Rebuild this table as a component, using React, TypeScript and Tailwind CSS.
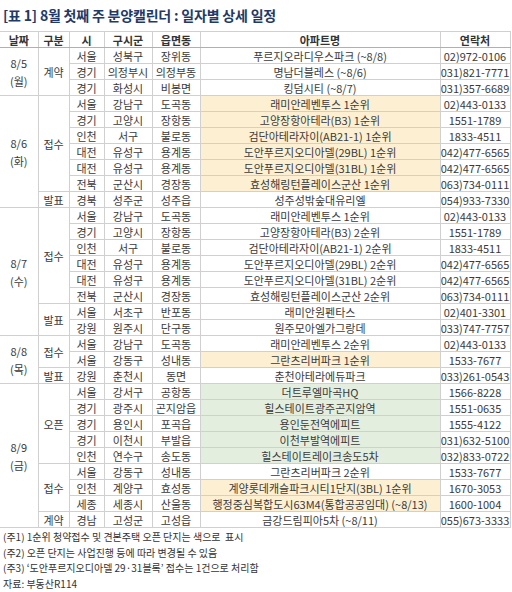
import React from 'react';

type Row = { si: string; gu: string; dong: string; apt: string; tel: string; hl?: 'y' | 'g' };
type Sub = { kind: string; rows: Row[] };
type Day = { date: string; dow: string; subs: Sub[] };

const DAYS: Day[] = [
  {
    date: '8/5',
    dow: '(월)',
    subs: [
      {
        kind: '계약',
        rows: [
          { si: '서울', gu: '성북구', dong: '장위동', apt: '푸르지오라디우스파크 (~8/8)', tel: '02)972-0106' },
          { si: '경기', gu: '의정부시', dong: '의정부동', apt: '명남더블레스 (~8/6)', tel: '031)821-7771' },
          { si: '경기', gu: '화성시', dong: '비봉면', apt: '킹덤시티 (~8/7)', tel: '031)357-6689' },
        ],
      },
    ],
  },
  {
    date: '8/6',
    dow: '(화)',
    subs: [
      {
        kind: '접수',
        rows: [
          { si: '서울', gu: '강남구', dong: '도곡동', apt: '래미안레벤투스 1순위', tel: '02)443-0133', hl: 'y' },
          { si: '경기', gu: '고양시', dong: '장항동', apt: '고양장항아테라(B3) 1순위', tel: '1551-1789', hl: 'y' },
          { si: '인천', gu: '서구', dong: '불로동', apt: '검단아테라자이(AB21-1) 1순위', tel: '1833-4511', hl: 'y' },
          { si: '대전', gu: '유성구', dong: '용계동', apt: '도안푸르지오디아델(29BL) 1순위', tel: '042)477-6565', hl: 'y' },
          { si: '대전', gu: '유성구', dong: '용계동', apt: '도안푸르지오디아델(31BL) 1순위', tel: '042)477-6565', hl: 'y' },
          { si: '전북', gu: '군산시', dong: '경장동', apt: '효성해링턴플레이스군산 1순위', tel: '063)734-0111', hl: 'y' },
        ],
      },
      {
        kind: '발표',
        rows: [{ si: '경북', gu: '성주군', dong: '성주읍', apt: '성주성밖숲대유리엘', tel: '054)933-7330' }],
      },
    ],
  },
  {
    date: '8/7',
    dow: '(수)',
    subs: [
      {
        kind: '접수',
        rows: [
          { si: '서울', gu: '강남구', dong: '도곡동', apt: '래미안레벤투스 1순위', tel: '02)443-0133' },
          { si: '경기', gu: '고양시', dong: '장항동', apt: '고양장항아테라(B3) 2순위', tel: '1551-1789' },
          { si: '인천', gu: '서구', dong: '불로동', apt: '검단아테라자이(AB21-1) 2순위', tel: '1833-4511' },
          { si: '대전', gu: '유성구', dong: '용계동', apt: '도안푸르지오디아델(29BL) 2순위', tel: '042)477-6565' },
          { si: '대전', gu: '유성구', dong: '용계동', apt: '도안푸르지오디아델(31BL) 2순위', tel: '042)477-6565' },
          { si: '전북', gu: '군산시', dong: '경장동', apt: '효성해링턴플레이스군산 2순위', tel: '063)734-0111' },
        ],
      },
      {
        kind: '발표',
        rows: [
          { si: '서울', gu: '서초구', dong: '반포동', apt: '래미안원펜타스', tel: '02)401-3301' },
          { si: '강원', gu: '원주시', dong: '단구동', apt: '원주모아엘가그랑데', tel: '033)747-7757' },
        ],
      },
    ],
  },
  {
    date: '8/8',
    dow: '(목)',
    subs: [
      {
        kind: '접수',
        rows: [
          { si: '서울', gu: '강남구', dong: '도곡동', apt: '래미안레벤투스 2순위', tel: '02)443-0133' },
          { si: '서울', gu: '강동구', dong: '성내동', apt: '그란츠리버파크 1순위', tel: '1533-7677', hl: 'y' },
        ],
      },
      {
        kind: '발표',
        rows: [{ si: '강원', gu: '춘천시', dong: '동면', apt: '춘천아테라에듀파크', tel: '033)261-0543' }],
      },
    ],
  },
  {
    date: '8/9',
    dow: '(금)',
    subs: [
      {
        kind: '오픈',
        rows: [
          { si: '서울', gu: '강서구', dong: '공항동', apt: '더트루엘마곡HQ', tel: '1566-8228', hl: 'g' },
          { si: '경기', gu: '광주시', dong: '곤지암읍', apt: '힐스테이트광주곤지암역', tel: '1551-0635', hl: 'g' },
          { si: '경기', gu: '용인시', dong: '포곡읍', apt: '용인둔전역에피트', tel: '1555-4122', hl: 'g' },
          { si: '경기', gu: '이천시', dong: '부발읍', apt: '이천부발역에피트', tel: '031)632-5100', hl: 'g' },
          { si: '인천', gu: '연수구', dong: '송도동', apt: '힐스테이트레이크송도5차', tel: '032)833-0722', hl: 'g' },
        ],
      },
      {
        kind: '접수',
        rows: [
          { si: '서울', gu: '강동구', dong: '성내동', apt: '그란츠리버파크 2순위', tel: '1533-7677' },
          { si: '인천', gu: '계양구', dong: '효성동', apt: '계양롯데캐슬파크시티1단지(3BL) 1순위', tel: '1670-3053', hl: 'y' },
          { si: '세종', gu: '세종시', dong: '산울동', apt: '행정중심복합도시63M4(통합공공임대) (~8/13)', tel: '1600-1004', hl: 'y' },
        ],
      },
      {
        kind: '계약',
        rows: [{ si: '경남', gu: '고성군', dong: '고성읍', apt: '금강드림피아5차 (~8/11)', tel: '055)673-3333' }],
      },
    ],
  },
];

const cell = 'border border-[#d0d0d0] p-0 text-center whitespace-nowrap overflow-hidden';

export default function App() {
  return (
    <div
      className="w-[512px] h-[592px] bg-white text-[#3a3a3a] overflow-hidden"
      style={{ fontFamily: '"Noto Sans CJK KR", "Noto Sans", sans-serif' }}
    >
      <div className="px-[3px] pt-[5px] h-[31px] text-[14px] leading-[20px] font-bold text-[#1f3a68] tracking-[-0.2px]">
        [표 1] 8월 첫째 주 분양캘린더 : 일자별 상세 일정
      </div>

      <table className="w-[510px] table-fixed border-collapse text-[11px] leading-[14px]">
        <colgroup>
          <col className="w-[38px]" />
          <col className="w-[31px]" />
          <col className="w-[35px]" />
          <col className="w-[48px]" />
          <col className="w-[48px]" />
          <col className="w-[240px]" />
          <col className="w-[70px]" />
        </colgroup>
        <thead>
          <tr className="h-[16px] font-bold text-[#333]">
            <th className={`${cell} border-l-0 border-b-[#b0b0b0]`}>날짜</th>
            <th className={`${cell} border-b-[#b0b0b0]`}>구분</th>
            <th className={`${cell} border-b-[#b0b0b0]`}>시</th>
            <th className={`${cell} border-b-[#b0b0b0]`}>구시군</th>
            <th className={`${cell} border-b-[#b0b0b0]`}>읍면동</th>
            <th className={`${cell} border-b-[#b0b0b0]`}>아파트명</th>
            <th className={`${cell} border-b-[#b0b0b0]`}>연락처</th>
          </tr>
        </thead>
        <tbody>
          {DAYS.map((day) => {
            const total = day.subs.reduce((n, s) => n + s.rows.length, 0);
            return day.subs.map((sub, si) =>
              sub.rows.map((r, ri) => {
                const firstOfDay = si === 0 && ri === 0;
                const top = firstOfDay ? 'border-t-[#b0b0b0]' : '';
                const bg = r.hl === 'y' ? 'bg-[#fdf0d2]' : r.hl === 'g' ? 'bg-[#e4eedf]' : '';
                return (
                  <tr key={`${day.date}-${si}-${ri}`} className="h-[16px]">
                    {firstOfDay && (
                      <td rowSpan={total} className={`${cell} border-l-0 ${top} leading-[18px]`}>
                        {day.date}
                        <br />
                        {day.dow}
                      </td>
                    )}
                    {ri === 0 && (
                      <td rowSpan={sub.rows.length} className={`${cell} ${top}`}>
                        {sub.kind}
                      </td>
                    )}
                    <td className={`${cell} ${top}`}>{r.si}</td>
                    <td className={`${cell} ${top}`}>{r.gu}</td>
                    <td className={`${cell} ${top}`}>{r.dong}</td>
                    <td className={`${cell} ${top} ${bg}`}>{r.apt}</td>
                    <td className={`${cell} ${top}`}>{r.tel}</td>
                  </tr>
                );
              })
            );
          })}
        </tbody>
      </table>

      <div className="px-[3px] pt-[1px] text-[10px] leading-[15.5px] text-[#333]">
        <div>(주1) 1순위 청약접수 및 견본주택 오픈 단지는 색으로&nbsp; 표시</div>
        <div>(주2) 오픈 단지는 사업진행 등에 따라 변경될 수 있음</div>
        <div>(주3) ‘도안푸르지오디아델 29·31블록’ 접수는 1건으로 처리함</div>
        <div>자료: 부동산R114</div>
      </div>
    </div>
  );
}
